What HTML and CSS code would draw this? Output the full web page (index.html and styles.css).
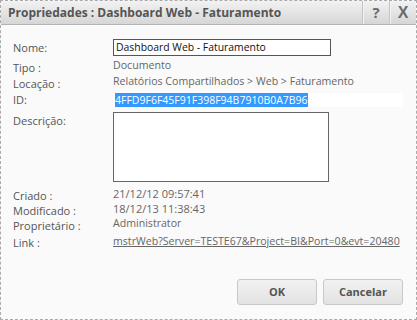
FILE: index.html
```html
<!DOCTYPE html>
<html lang="pt">
<head>
<meta charset="utf-8">
<title>Propriedades</title>
<link rel="stylesheet" href="styles.css">
</head>
<body>
<div class="dialog">
  <div class="titlebar">
    <div class="title">Propriedades : Dashboard Web - Faturamento</div>
    <div class="tb-btn help">?</div>
    <div class="tb-btn close">X</div>
  </div>
  <div class="body">
    <div class="row row-nome">
      <div class="label">Nome:</div>
      <div class="input">Dashboard Web - Faturamento</div>
    </div>
    <div class="row row-tipo">
      <div class="label">Tipo :</div>
      <div class="value">Documento</div>
    </div>
    <div class="row row-loc">
      <div class="label">Locação :</div>
      <div class="value">Relatórios Compartilhados &gt; Web &gt; Faturamento</div>
    </div>
    <div class="row row-id">
      <div class="label">ID:</div>
      <div class="idfield"><span class="sel">4FFD9F6F45F91F398F94B7910B0A7B96</span></div>
    </div>
    <div class="row row-desc">
      <div class="label">Descrição:</div>
      <div class="textarea"></div>
    </div>
    <div class="row row-info first">
      <div class="label">Criado :</div>
      <div class="value date">21/12/12 09:57:41</div>
    </div>
    <div class="row row-info">
      <div class="label">Modificado :</div>
      <div class="value date">18/12/13 11:38:43</div>
    </div>
    <div class="row row-info">
      <div class="label">Proprietário :</div>
      <div class="value">Administrator</div>
    </div>
    <div class="row row-info row-link">
      <div class="label">Link :</div>
      <div class="value link">mstrWeb?Server=TESTE67&amp;Project=BI&amp;Port=0&amp;evt=20480</div>
    </div>
    <div class="buttons">
      <div class="btn">OK</div>
      <div class="btn">Cancelar</div>
    </div>
  </div>
</div>
</body>
</html>
```

FILE: styles.css
```css
html, body {
  margin: 0;
  padding: 0;
  background: #fafafa;
}
.dialog {
  width: 417px;
  height: 320px;
  box-sizing: border-box;
  border: 1px dashed #aaaaaa;
  background: #fafafa;
  font-family: "Open Sans", "Noto Sans", sans-serif;
  font-size: 11px;
  color: #666;
  display: flex;
  flex-direction: column;
}
.titlebar {
  height: 23px;
  border-bottom: 1px solid #b4b4b4;
  background: linear-gradient(#f2f2f2, #d6d6d6);
  display: flex;
  align-items: stretch;
}
.title {
  flex: 1;
  padding-left: 7px;
  font-weight: bold;
  font-size: 12px;
  color: #555;
  line-height: 23px;
}
.tb-btn {
  width: 26px;
  border-left: 1px solid #c4c4c4;
  box-shadow: inset 1px 0 0 #f4f4f4;
  text-align: center;
  font-weight: bold;
  font-size: 15px;
  line-height: 23px;
  color: #6a6a6a;
}
.tb-btn.close {
  font-family: "Liberation Sans", sans-serif;
  font-size: 16px;
}
.body {
  flex: 1;
  padding: 14px 13px 14px 12px;
  display: flex;
  flex-direction: column;
}
.row {
  display: flex;
  align-items: flex-start;
}
.label {
  width: 100px;
  flex: none;
  color: #555;
  line-height: 15px;
}
.value {
  font-size: 10.6px;
  line-height: 15px;
  white-space: nowrap;
}
.value.date {
  font-size: 11px;
}
.row-nome {
  height: 17px;
}
.row-nome .label {
  line-height: 17px;
}
.input {
  width: 214px;
  height: 15px;
  border: 1px solid #555;
  background: #fff;
  color: #111;
  font-size: 10.4px;
  line-height: 15px;
  padding-left: 2px;
  white-space: nowrap;
  overflow: hidden;
}
.row-tipo {
  margin-top: 2px;
  height: 15px;
}
.row-tipo .label,
.row-loc .label {
  padding-top: 2px;
}
.row-loc {
  height: 15px;
  margin-top: 1px;
}
.row-id {
  margin-top: 4px;
  height: 14px;
}
.row-id .label {
  line-height: 14px;
}
.idfield {
  width: 288px;
  height: 14px;
  background: #fff;
  padding-left: 2px;
  font-size: 10.5px;
  line-height: 14px;
}
.sel {
  background: #3399ff;
  color: #fff;
}
.row-desc {
  margin-top: 5px;
  height: 70px;
}
.row-desc .label {
  padding-top: 1px;
}
.textarea {
  width: 214px;
  height: 68px;
  border: 1px solid #666;
  background: #fff;
}
.row-info {
  height: 15px;
}
.row-info .label {
  padding-top: 2px;
}
.row-info.first {
  margin-top: 4px;
}
.row-link {
  margin-top: 3px;
}
.row-link .label {
  padding-top: 1px;
}
.link {
  width: 289px;
  overflow: hidden;
  text-decoration: underline;
}
.buttons {
  margin-top: auto;
  display: flex;
  justify-content: flex-end;
  gap: 6px;
}
.btn {
  width: 78px;
  height: 24px;
  border: 1px solid #c8c8c8;
  border-radius: 3px;
  background: linear-gradient(#f2f2f2, #e2e2e2);
  color: #555;
  font-weight: bold;
  font-size: 11px;
  text-align: center;
  line-height: 24px;
}
```
